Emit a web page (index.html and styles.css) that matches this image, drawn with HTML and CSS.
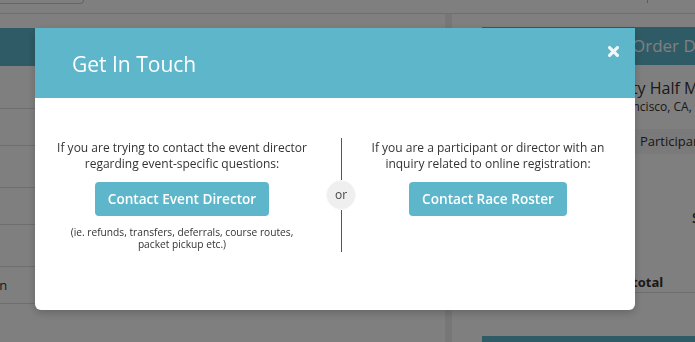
FILE: index.html
```html
<!DOCTYPE html>
<html>
<head>
	<meta http-equiv="Content-Type" content="text/html; charset=utf-8" />
	<meta name="viewport" content="width=device-width, initial-scale=1">
	<title>Get In Touch | Race Roster</title>
	<link rel="stylesheet" href="styles.css">
</head>
<body>
<div class="topbar">
	<div class="search"></div>
	<span class="tick"></span>
</div>
<div class="main">
	<div class="left_col">
		<div class="panel_head"></div>
		<div class="row first"></div>
		<div class="row"></div>
		<div class="row tall"></div>
		<div class="row"></div>
		<div class="row tall"></div>
		<div class="row"><span class="row_label">Donation</span></div>
	</div>
	<div class="sep"></div>
	<div class="right_col">
		<div class="order_head">Order Details</div>
		<div class="event">
			<div class="event_name">The City Half Marathon</div>
			<div class="event_place">San Francisco, CA, USA</div>
		</div>
		<div class="participant">Participant: Jane Runner</div>
		<div class="summary">Summary</div>
		<div class="subtotal">Sub-total</div>
		<div class="checkout"></div>
	</div>
</div>

<div class="backdrop"></div>

<div class="modal">
	<div class="modal_head">
		<h2>Get In Touch</h2>
		<a class="close" href="#">
			<svg width="11" height="11" viewBox="0 0 11 11">
				<path d="M1.6 1.6 L9.4 9.4 M9.4 1.6 L1.6 9.4" stroke="#fff" stroke-width="3.2" stroke-linecap="square" />
			</svg>
		</a>
	</div>
	<div class="modal_body">
		<div class="contact_col">
			<p>If you are trying to contact the event director<br>regarding event-specific questions:</p>
			<a class="contact_button" href="#">Contact Event Director</a>
			<p class="note">(ie. refunds, transfers, deferrals, course routes,<br>packet pickup etc.)</p>
		</div>
		<div class="divider">
			<span class="divider_line"></span>
			<span class="or">or</span>
			<span class="divider_line"></span>
		</div>
		<div class="contact_col">
			<p>If you are a participant or director with an<br>inquiry related to online registration:</p>
			<a class="contact_button" href="#">Contact Race Roster</a>
		</div>
	</div>
</div>
</body>
</html>
```
FILE: styles.css
```css
body{
	margin: 0;
	background-color: #fff;
	font-family: "Open Sans", "Liberation Sans", sans-serif;
	color: #333;
	overflow: hidden;
	height: 342px;
}

/* page behind the dialog */
.topbar{
	height: 13px;
	border-bottom: 1px solid #dedede;
	display: flex;
}
.search{
	width: 83px;
	height: 3px;
	border-right: 1px solid #ccc;
	border-bottom: 1px solid #ccc;
	border-bottom-right-radius: 4px;
}
.tick{
	width: 1px;
	height: 3px;
	margin-left: 563px;
	background-color: #bbb;
}

.main{
	display: flex;
	height: 328px;
}
.left_col{
	width: 445px;
	padding-top: 14px;
}
.panel_head{
	height: 38px;
	background-color: #5cb6cb;
}
.row{
	height: 36px;
	border-bottom: 1px solid #ddd;
	display: flex;
	align-items: center;
	font-size: 13px;
}
.row.first{
	height: 42px;
}
.row.tall{
	height: 41px;
}
.row_label{
	margin-left: -49px;
}
.sep{
	width: 7px;
	background-color: #eee;
}
.right_col{
	flex: 1;
	padding: 13px 0 0 30px;
	white-space: nowrap;
	overflow: hidden;
}
.order_head{
	height: 38px;
	line-height: 38px;
	background-color: #5cb6cb;
	color: #fff;
	font-size: 17px;
	padding-left: 150px;
}
.event{
	padding: 12px 0 0 104px;
}
.event_name{
	font-size: 16px;
	line-height: 22px;
}
.event_place{
	font-size: 12px;
	line-height: 16px;
	padding-left: 5px;
}
.participant{
	margin-top: 14px;
	height: 25px;
	line-height: 25px;
	background-color: #f4f4f4;
	font-size: 13px;
	padding-left: 158px;
}
.summary{
	margin-top: 54px;
	line-height: 20px;
	font-size: 14px;
	font-weight: 600;
	padding-left: 210px;
}
.subtotal{
	margin-top: 44px;
	line-height: 20px;
	font-size: 13px;
	font-weight: 700;
	padding-left: 122px;
	border-bottom: 1px solid #ddd;
}
.checkout{
	margin-top: 43px;
	height: 30px;
	background-color: #5cb6cb;
}

.backdrop{
	position: fixed;
	top: 0;
	left: 0;
	right: 0;
	bottom: 0;
	background-color: rgba(0, 0, 0, 0.5);
}

/* dialog */
.modal{
	position: fixed;
	top: 28px;
	left: 35px;
	width: 600px;
	background-color: #fff;
	border-radius: 6px;
	box-shadow: 0 3px 9px rgba(0, 0, 0, 0.2);
}
.modal_head{
	height: 70px;
	background-color: #5db6c9;
	display: flex;
	align-items: center;
	justify-content: space-between;
	padding: 0 16px 0 37px;
}
.modal_head h2{
	margin: 0;
	color: #fff;
	font-size: 21px;
	font-weight: 400;
	padding-top: 2px;
}
.close{
	align-self: flex-start;
	margin-top: 18px;
	opacity: 0.9;
	display: flex;
}
.modal_body{
	display: grid;
	grid-template-columns: 264px 54px 240px;
	padding: 40px 27px 58px 15px;
}
.contact_col{
	display: flex;
	flex-direction: column;
	align-items: center;
	text-align: center;
	padding-top: 2px;
}
.contact_col p{
	margin: 0;
	font-size: 12px;
	line-height: 16px;
	color: #333;
}
.contact_col p.note{
	margin-top: 10px;
	font-size: 10.2px;
	line-height: 12px;
	padding-bottom: 2px;
}
.contact_button{
	margin-top: 10px;
	background-color: #5db6c9;
	color: #fff;
	text-decoration: none;
	font-size: 13.6px;
	font-weight: 600;
	line-height: 20px;
	padding: 7px 13px;
	border-radius: 4px;
}
.divider{
	display: flex;
	flex-direction: column;
	align-items: center;
}
.divider_line{
	flex: 1;
	width: 1px;
	background-color: #555;
}
.or{
	width: 28px;
	height: 28px;
	line-height: 27px;
	border-radius: 50%;
	background-color: #efefef;
	border: 1px solid #f8f8f8;
	text-align: center;
	font-size: 12px;
	color: #444;
}
```
